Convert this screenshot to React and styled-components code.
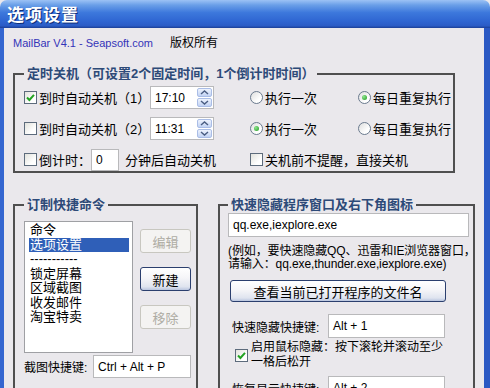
import React from "react";
import styled, { createGlobalStyle } from "styled-components";

const GlobalStyle = createGlobalStyle`
  html, body {
    margin: 0;
    padding: 0;
    overflow: hidden;
    background: #eae8ec;
  }
  #root {
    width: 490px;
    height: 388px;
  }
`;

const FONT = `"Liberation Sans", "Noto Sans CJK SC", sans-serif`;

const Window = styled.div`
  width: 490px;
  height: 388px;
  overflow: hidden;
  display: flex;
  flex-direction: column;
  font-family: ${FONT};
  font-size: 12px;
  color: #000;
`;

const TitleBar = styled.div`
  height: 28px;
  flex-shrink: 0;
  box-sizing: border-box;
  padding: 0 0 2px 7px;
  display: flex;
  align-items: center;
  border-top-left-radius: 7px;
  border-top-right-radius: 7px;
  background: linear-gradient(
    to bottom,
    #9cc2f5 0%,
    #6a9fe8 18%,
    #3d78dc 45%,
    #2f66d2 75%,
    #2b5cc6 92%,
    #1b3f96 100%
  );
  color: #fff;
  font-size: 17px;
  font-weight: bold;
  letter-spacing: 1px;
  text-shadow: 1px 1px 0 #0c2c78;
`;

const Body = styled.div`
  flex: 1;
  min-height: 0;
  overflow: hidden;
  box-sizing: border-box;
  background: #eae8ec;
  border-left: 4px solid #3466d0;
  border-right: 6px solid #2a58c3;
  padding: 8px 0 0 9px;
`;

const Header = styled.div`
  display: flex;
  line-height: 14px;
  height: 14px;
`;

const Brand = styled.span`
  width: 157px;
  color: #3434b8;
  font-size: 11px;
`;

const Group = styled.fieldset`
  margin: 0;
  min-width: 0;
  box-sizing: border-box;
  width: ${(p) => p.$w}px;
  height: ${(p) => (p.$h ? `${p.$h}px` : "auto")};
  border: 2px solid #4f4f4f;
  padding: ${(p) => p.$pad};
`;

const Legend = styled.legend`
  padding: 0 3px;
  font-size: 13px;
  font-weight: bold;
  line-height: 16px;
  color: #2d4a78;
`;

const TimerGrid = styled.div`
  display: grid;
  grid-template-columns: 126px 100px 108px 1fr;
  grid-auto-rows: 23px;
  row-gap: 8px;
  font-size: 13px;
`;

const Cell = styled.label`
  display: flex;
  align-items: center;
  grid-column: ${(p) => p.$span || "auto"};
  white-space: nowrap;
`;

const BoxMark = styled.span`
  width: 13px;
  height: 13px;
  box-sizing: border-box;
  flex-shrink: 0;
  border: 1px solid #5d6b7c;
  background: linear-gradient(135deg, #e2e2dc, #ffffff 70%);
  margin-right: 2px;
  display: flex;
  align-items: center;
  justify-content: center;
`;

const RadioMark = styled.span`
  width: 13px;
  height: 13px;
  box-sizing: border-box;
  flex-shrink: 0;
  border-radius: 50%;
  border: 1px solid #6a7a8e;
  background: linear-gradient(135deg, #dedede, #ffffff 70%);
  margin-right: 2px;
  display: flex;
  align-items: center;
  justify-content: center;
`;

const Dot = styled.span`
  width: 5px;
  height: 5px;
  border-radius: 50%;
  background: radial-gradient(circle at 35% 35%, #8fe58f, #1f9a1f);
`;

const Field = styled.div`
  width: ${(p) => p.$w}px;
  height: ${(p) => p.$h || 23}px;
  box-sizing: border-box;
  flex-shrink: 0;
  background: #fff;
  border: 1px solid #b9b9bb;
  display: flex;
  align-items: center;
  padding: 0 4px;
  font-size: 12px;
  white-space: nowrap;
  overflow: hidden;
`;

const TimeBox = styled(Field)`
  justify-content: space-between;
  padding: 0 1px 0 4px;
`;

const Spin = styled.div`
  display: flex;
  flex-direction: column;
  gap: 1px;
`;

const SpinBtn = styled.span`
  width: 15px;
  height: 9px;
  box-sizing: border-box;
  border: 1px solid #aabde6;
  border-radius: 2px;
  background: linear-gradient(#eef3fd, #c2d3f4);
  display: flex;
  align-items: center;
  justify-content: center;
`;

const Check = ({ on }) => (
  <BoxMark>
    {on && (
      <svg width="11" height="11" viewBox="0 0 11 11">
        <path d="M2 5.5 L4.4 8 L9 2.8" fill="none" stroke="#22a322" strokeWidth="2" />
      </svg>
    )}
  </BoxMark>
);

const Radio = ({ on }) => <RadioMark>{on && <Dot />}</RadioMark>;

const Chevron = ({ down }) => (
  <svg width="9" height="5" viewBox="0 0 9 5">
    <path
      d={down ? "M1 1 L4.5 4 L8 1" : "M1 4 L4.5 1 L8 4"}
      fill="none"
      stroke="#4a5d82"
      strokeWidth="1.4"
    />
  </svg>
);

const TimeInput = ({ value }) => (
  <TimeBox $w={64}>
    {value}
    <Spin>
      <SpinBtn>
        <Chevron />
      </SpinBtn>
      <SpinBtn>
        <Chevron down />
      </SpinBtn>
    </Spin>
  </TimeBox>
);

const Bottom = styled.div`
  display: flex;
  gap: 20px;
  margin-top: 24px;
`;

const CmdArea = styled.div`
  display: flex;
  gap: 7px;
`;

const List = styled.div`
  width: 109px;
  height: 132px;
  box-sizing: border-box;
  background: #fff;
  border: 1px solid #9fa0a4;
  padding: 1px 3px 0 4px;
  font-size: 13px;
  line-height: 14.5px;
`;

const Item = styled.div`
  padding-left: 1px;
  white-space: nowrap;
  background: ${(p) => (p.$sel ? "#2f5fb8" : "transparent")};
  color: ${(p) => (p.$sel ? "#fff" : "#000")};
`;

const BtnCol = styled.div`
  display: flex;
  flex-direction: column;
  gap: 14px;
  padding-top: 8px;
`;

const Button = styled.div`
  width: ${(p) => p.$w}px;
  height: ${(p) => p.$h || 24}px;
  box-sizing: border-box;
  border-radius: 3px;
  display: flex;
  align-items: center;
  justify-content: center;
  font-size: 13px;
  border: 1px solid ${(p) => (p.$off ? "#c8c7c0" : "#2b3f6e")};
  color: ${(p) => (p.$off ? "#aeaca4" : "#000")};
  background: ${(p) =>
    p.$off
      ? "#f4f3f2"
      : "linear-gradient(#ffffff 0%, #f5f5f8 45%, #dfe4ef 85%, #b9c5df 100%)"};
  margin-left: ${(p) => p.$ml || 0}px;
`;

const KeyRow = styled.div`
  display: flex;
  align-items: center;
  margin-top: ${(p) => p.$mt}px;
  margin-left: ${(p) => p.$ml || 0}px;
`;

const KeyLabel = styled.span`
  width: ${(p) => p.$w}px;
  white-space: nowrap;
`;

const Note = styled.div`
  margin-top: 8px;
  line-height: 13px;
  white-space: nowrap;
  letter-spacing: -0.1px;
`;

const MouseRow = styled.label`
  display: flex;
  align-items: center;
  margin: 2px 0 0 7px;
  font-size: 12px;
  line-height: 15px;
`;

export default function App() {
  return (
    <>
      <GlobalStyle />
      <Window>
        <TitleBar>选项设置</TitleBar>
        <Body>
          <Header>
            <Brand>MailBar V4.1 - Seapsoft.com</Brand>
            <span>版权所有</span>
          </Header>

          <Group $w={442} $pad="4px 0 0 9px" style={{ marginTop: 16 }}>
            <Legend>定时关机（可设置2个固定时间，1个倒计时时间）</Legend>
            <TimerGrid>
              <Cell>
                <Check on />
                到时自动关机（1）
              </Cell>
              <Cell>
                <TimeInput value="17:10" />
              </Cell>
              <Cell>
                <Radio />
                执行一次
              </Cell>
              <Cell>
                <Radio on />
                每日重复执行
              </Cell>

              <Cell>
                <Check />
                到时自动关机（2）
              </Cell>
              <Cell>
                <TimeInput value="11:31" />
              </Cell>
              <Cell>
                <Radio on />
                执行一次
              </Cell>
              <Cell>
                <Radio />
                每日重复执行
              </Cell>

              <Cell $span="1 / 3">
                <Check />
                倒计时：
                <Field $w={28} $h={22}>
                  0
                </Field>
                <span style={{ marginLeft: 6 }}>分钟后自动关机</span>
              </Cell>
              <Cell $span="3 / 5">
                <Check />
                关机前不提醒，直接关机
              </Cell>
            </TimerGrid>
          </Group>

          <Bottom>
            <Group $w={185} $h={220} $pad="8px 0 0 9px">
              <Legend>订制快捷命令</Legend>
              <CmdArea>
                <List>
                  <Item>命令</Item>
                  <Item $sel>选项设置</Item>
                  <Item>-----------</Item>
                  <Item>锁定屏幕</Item>
                  <Item>区域截图</Item>
                  <Item>收发邮件</Item>
                  <Item>淘宝特卖</Item>
                </List>
                <BtnCol>
                  <Button $w={51} $off>
                    编辑
                  </Button>
                  <Button $w={51}>新建</Button>
                  <Button $w={51} $off>
                    移除
                  </Button>
                </BtnCol>
              </CmdArea>
              <KeyRow $mt={2}>
                <KeyLabel $w={69}>截图快捷键:</KeyLabel>
                <Field $w={98}>Ctrl + Alt + P</Field>
              </KeyRow>
            </Group>

            <Group $w={257} $h={220} $pad="0 0 0 8px">
              <Legend>快速隐藏程序窗口及右下角图标</Legend>
              <Field $w={241} $h={24}>
                qq.exe,iexplore.exe
              </Field>
              <Note>
                (例如，要快速隐藏QQ、迅雷和IE浏览器窗口，
                <br />
                请输入：qq.exe,thunder.exe,iexplore.exe)
              </Note>
              <Button $w={216} $h={22} $ml={2} style={{ marginTop: 9 }}>
                查看当前已打开程序的文件名
              </Button>
              <KeyRow $mt={12} $ml={4}>
                <KeyLabel $w={96}>快速隐藏快捷键:</KeyLabel>
                <Field $w={117} $h={24}>
                  Alt + 1
                </Field>
              </KeyRow>
              <MouseRow>
                <Check on />
                <span style={{ marginLeft: 1 }}>
                  启用鼠标隐藏：按下滚轮并滚动至少
                  <br />
                  一格后松开
                </span>
              </MouseRow>
              <KeyRow $mt={6} $ml={4}>
                <KeyLabel $w={96}>恢复显示快捷键:</KeyLabel>
                <Field $w={117} $h={24}>
                  Alt + 2
                </Field>
              </KeyRow>
            </Group>
          </Bottom>
        </Body>
      </Window>
    </>
  );
}
